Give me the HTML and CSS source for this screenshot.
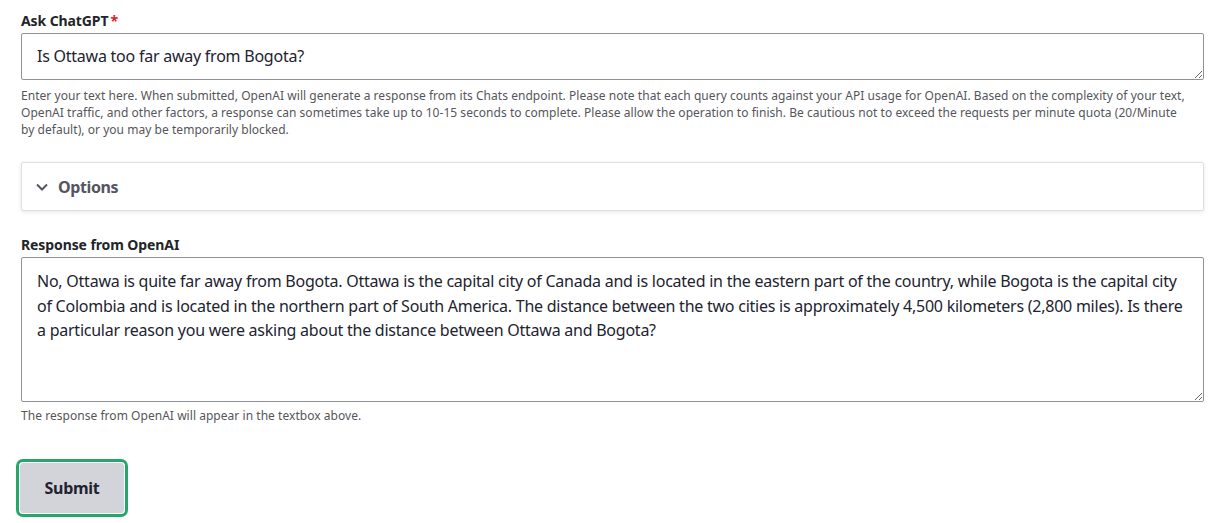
FILE: index.html
```html
<!DOCTYPE html>
<html lang="en">
<head>
<meta charset="utf-8">
<title>Ask ChatGPT</title>
<link rel="stylesheet" href="styles.css">
</head>
<body>
<form class="form">
  <div class="field">
    <label class="label" for="q">Ask ChatGPT<span class="req">*</span></label>
    <div class="textarea-wrap">
      <textarea id="q" class="textarea textarea-small" rows="1">Is Ottawa too far away from Bogota?</textarea>
    </div>
    <div class="desc">Enter your text here. When submitted, OpenAI will generate a response from its Chats endpoint. Please note that each query counts against your API usage for OpenAI. Based on the complexity of your text,<br>OpenAI traffic, and other factors, a response can sometimes take up to 10-15 seconds to complete. Please allow the operation to finish. Be cautious not to exceed the requests per minute quota (20/Minute<br>by default), or you may be temporarily blocked.</div>
  </div>

  <details class="details">
    <summary class="summary">
      <svg class="chev" width="12" height="8" viewBox="0 0 12 8" aria-hidden="true"><path d="M1 1.5 L6 6.5 L11 1.5" fill="none" stroke="#545560" stroke-width="2"/></svg>
      <span>Options</span>
    </summary>
  </details>

  <div class="field field-response">
    <label class="label" for="r">Response from OpenAI</label>
    <div class="textarea-wrap">
      <textarea id="r" class="textarea textarea-large" rows="5">No, Ottawa is quite far away from Bogota. Ottawa is the capital city of Canada and is located in the eastern part of the country, while Bogota is the capital city
of Colombia and is located in the northern part of South America. The distance between the two cities is approximately 4,500 kilometers (2,800 miles). Is there
a particular reason you were asking about the distance between Ottawa and Bogota?</textarea>
    </div>
    <div class="desc desc-short">The response from OpenAI will appear in the textbox above.</div>
  </div>

  <div class="actions">
    <button type="button" class="button">Submit</button>
  </div>
</form>
</body>
</html>
```

FILE: styles.css
```css
* { box-sizing: border-box; }
html, body { margin: 0; background: #fff; }
body {
  font-family: "Noto Sans", "Open Sans", sans-serif;
  color: #222330;
  overflow: hidden;
}
.form {
  padding: 12px 22px 0 21px;
  display: flex;
  flex-direction: column;
}
.field { display: flex; flex-direction: column; }
.label {
  font-size: 14px;
  font-weight: 700;
  line-height: 17px;
  color: #232429;
  margin-bottom: 4px;
  letter-spacing: -0.1px;
}
.req { color: #dc2323; margin-left: 2px; }
.textarea-wrap { display: flex; }
.textarea {
  width: 100%;
  font-family: inherit;
  font-size: 16px;
  color: #222330;
  border: 1px solid #8e929c;
  border-radius: 2px;
  padding: 10px 15px;
  line-height: 24.5px;
  resize: vertical;
  white-space: pre;
  overflow: hidden;
  letter-spacing: -0.24px;
  background: #fff;
}
.textarea-small { height: 47px; }
.textarea-large { height: 145px; padding-top: 11px; }
.desc {
  font-size: 12px;
  line-height: 17px;
  color: #55565b;
  margin-top: 7px;
  white-space: nowrap;
  letter-spacing: 0.04px;
}
.desc-short { margin-top: 5px; }
.details {
  margin-top: 24px;
  border: 1px solid #dedfe4;
  border-radius: 2px;
  box-shadow: 0 1px 4px rgba(0,0,0,0.1);
  height: 49px;
}
.summary {
  list-style: none;
  display: flex;
  align-items: center;
  gap: 10px;
  height: 47px;
  padding-left: 14px;
  font-size: 16px;
  font-weight: 700;
  color: #545560;
  letter-spacing: -0.4px;
}
.summary::-webkit-details-marker { display: none; }
.chev { display: block; }
.field-response { margin-top: 25px; }
.actions { margin-top: 35px; margin-left: -5px; }
.button {
  font-family: inherit;
  font-size: 16px;
  font-weight: 700;
  color: #222330;
  background: #d3d4d9;
  border: 1px solid #d3d4d9;
  width: 104px;
  height: 50px;
  margin: 4px;
  padding: 0;
  box-shadow: 0 0 0 1px #fff, 0 0 0 4px #26a769;
  border-radius: 3px;
  letter-spacing: -0.3px;
}
```
